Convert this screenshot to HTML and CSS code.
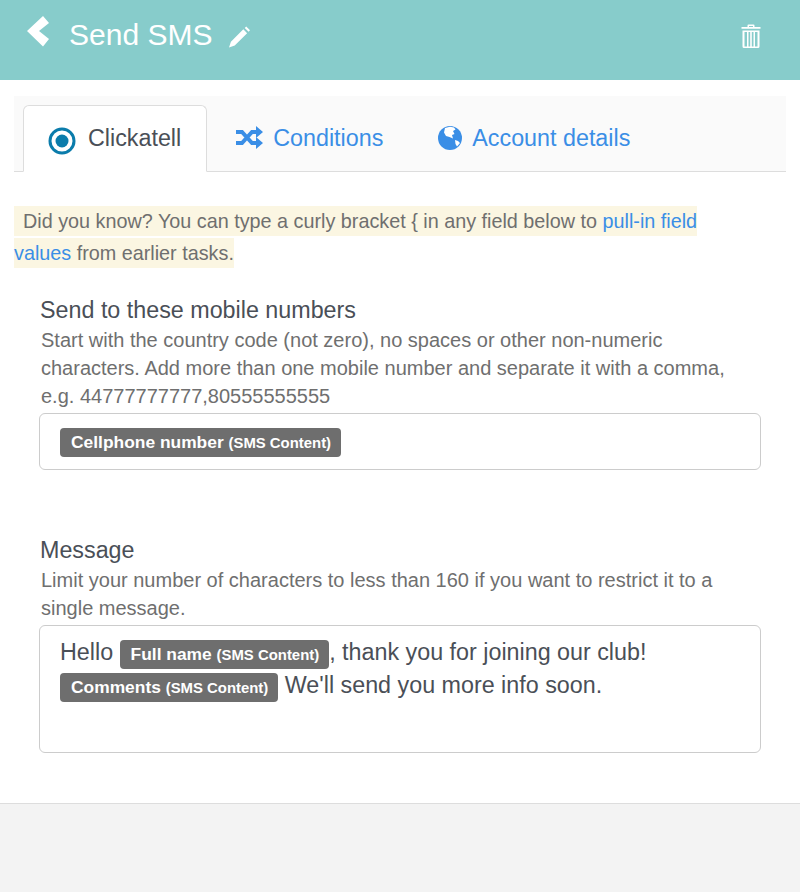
FILE: index.html

```html
<!DOCTYPE html>
<html lang="en">
<head>
  <meta charset="UTF-8">
  <title>Send SMS</title>
  <link rel="stylesheet" href="styles.css">
</head>
<body>
  <div class="topbar">
    <svg class="back-icon" width="24" height="32" viewBox="0 0 24 32"><path d="M1 15 17 0 23 7 13 15 23 23 17 30.500Z" fill="#fff"/></svg>
    <span class="title">Send SMS</span>
    <svg class="pencil-icon" width="21" height="22" viewBox="0 0 22 22"><path d="M0 22 2 16 15 3 19 7 6 20ZM16.500 1.500 18 0 22 4 20.500 5.500Z" fill="#fff"/></svg>
    <svg class="trash-icon" width="20" height="24" viewBox="0 0 20 24"><path d="M6.500 3V1.500Q6.500.5 7.500.5h5q1 0 1 1V3H19.500v1.800H.5V3ZM8 3h4V2H8ZM1.500 6.500h17v16q0 1.500-1.500 1.500H3q-1.500 0-1.500-1.500ZM3.500 8V22.500H6V8ZM7.500 8V22.500H9.200V8ZM10.800 8V22.500H12.500V8ZM14 8V22.500H16.500V8Z" fill="#fff" fill-rule="evenodd"/></svg>
  </div>

  <div class="content">
    <div class="tabs">
      <div class="tab active">
        <svg class="radio-icon" width="28" height="28" viewBox="0 0 28 28"><circle cx="14" cy="14" r="12" fill="none" stroke="#0b7cab" stroke-width="3"/><circle cx="14" cy="14" r="6.500" fill="#0b7cab"/></svg>
        <span>Clickatell</span>
      </div>
      <div class="tab">
        <svg class="tab-icon" width="28" height="23" viewBox="-1 0 28 23"><path d="M0 6H6L16 17H21M0 17H6L16 6H21" fill="none" stroke="#3a8ee6" stroke-width="4"/><path d="M20 0 27 6 20 12ZM20 11 27 17 20 23Z" fill="#3a8ee6"/></svg>
        <span>Conditions</span>
      </div>
      <div class="tab">
        <svg class="tab-icon" width="24" height="24" viewBox="0 0 24 24"><circle cx="12" cy="12" r="12" fill="#3a8ee6"/><path d="M7 2 12 .8 16 1.500 17.500 3.500 15 5 16.500 8 14 9 15 12.500 11.500 11 8 10 6 6.500ZM17 14 20 15 22 17 19 20.500 17.500 18Z" fill="#fff"/></svg>
        <span>Account details</span>
      </div>
    </div>

    <p class="hint"><span class="hint-text">Did you know? You can type a curly bracket { in any field below to <a href="#">pull-in field values</a> from earlier tasks.</span></p>

    <div class="field first">
      <h4>Send to these mobile numbers</h4>
      <p class="help">Start with the country code (not zero), no spaces or other non-numeric characters. Add more than one mobile number and separate it with a comma, e.g. 44777777777,80555555555</p>
      <div class="input short"><span class="tag">Cellphone number <small>(SMS Content)</small></span></div>
    </div>

    <div class="field">
      <h4>Message</h4>
      <p class="help">Limit your number of characters to less than 160 if you want to restrict it to a single message.</p>
      <div class="input tall">Hello <span class="tag">Full name <small>(SMS Content)</small></span>, thank you for joining our club! <span class="tag">Comments <small>(SMS Content)</small></span> We'll send you more info soon.</div>
    </div>
  </div>

  <div class="footer"></div>
</body>
</html>
```

FILE: styles.css

```css
html, body {
  margin: 0;
  padding: 0;
  height: 100%;
}
body {
  background-color: #fff;
  font-family: "Liberation Sans", Arial, sans-serif;
  color: #6f6f6f;
  font-size: 19.8px;
  overflow: hidden;
}
a {
  color: #3a8ee6;
  text-decoration: none;
}
.topbar {
  height: 80px;
  background-color: #87cccb;
  display: flex;
  align-items: flex-start;
  box-sizing: border-box;
  padding: 16px 39px 0 26px;
}
.back-icon {
  margin-right: 19px;
}
.title {
  color: #fff;
  font-size: 30px;
  line-height: 38px;
}
.pencil-icon {
  margin: 10px 0 0 17px;
}
.trash-icon {
  margin: 8px 0 0 auto;
}
.content {
  height: 723px;
  box-sizing: border-box;
  padding: 16px 14px 0;
}
.tabs {
  height: 76px;
  box-sizing: border-box;
  padding: 9px 0 0 9px;
  background-color: #fafafa;
  border-bottom: 1px solid #ddd;
  display: flex;
}
.tab {
  height: 67px;
  box-sizing: border-box;
  padding: 0 26px 0 27px;
  display: flex;
  align-items: center;
  gap: 10px;
  font-size: 23.3px;
  color: #3a8ee6;
  border: 1px solid transparent;
}
.tab.active {
  background-color: #fff;
  color: #4a4f57;
  border-color: #ddd;
  border-bottom-color: #fff;
  border-radius: 6px 6px 0 0;
  padding: 0 25px 0 24px;
  gap: 12px;
}
.radio-icon {
  margin-top: 5px;
}
.tab-icon {
  margin-bottom: 2px;
}
.hint {
  margin: 33px 50px 0 0;
  line-height: 32px;
}
.hint-text {
  background-color: #fbf6e2;
  padding: 4px 0 4px 9px;
}
.field {
  margin: 0 25px;
}
.field.first {
  margin-top: 26px;
}
.field h4 {
  margin: 0;
  padding-left: 1px;
  font-size: 23.3px;
  font-weight: normal;
  line-height: 30px;
  color: #4a4f57;
}
.help {
  margin: 1px 26px 0 2px;
  font-size: 20px;
  line-height: 28px;
}
.input {
  box-sizing: border-box;
  margin-top: 3px;
  border: 1px solid #ccc;
  border-radius: 6px;
  padding: 10px 20px;
  font-size: 23.3px;
  line-height: 32px;
  color: #4a4f57;
}
.input.short {
  height: 57px;
  margin-bottom: 65px;
}
.input.tall {
  height: 128px;
}
.tag {
  display: inline-block;
  background-color: #6e6e6e;
  color: #fff;
  font-size: 17.4px;
  font-weight: bold;
  line-height: 20px;
  padding: 4px 10px 4px 11px;
  border-radius: 4px;
  vertical-align: 0;
}
.tag small {
  font-size: 14.9px;
}
.footer {
  height: 89px;
  background-color: #f3f3f3;
  border-top: 1px solid #ddd;
}
```
